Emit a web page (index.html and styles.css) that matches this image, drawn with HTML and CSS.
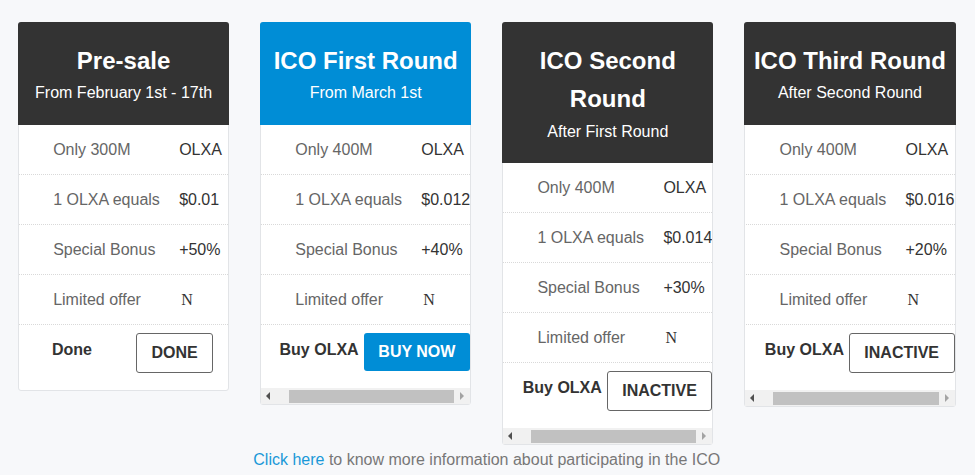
FILE: index.html
```html
<!DOCTYPE html>
<html lang="en">
<head>
<meta charset="utf-8">
<title>ICO Rounds</title>
<link rel="stylesheet" href="styles.css">
</head>
<body>
<div class="page">
  <div class="cards">
    <div class="card">
      <div class="head">
        <div class="title">Pre-sale</div>
        <div class="sub">From February 1st - 17th</div>
      </div>
      <div class="scroll">
        <div class="inner">
          <div class="row"><span class="label">Only 300M</span><span class="value">OLXA</span></div>
          <div class="row"><span class="label">1 OLXA equals</span><span class="value">$0.01</span></div>
          <div class="row"><span class="label">Special Bonus</span><span class="value">+50%</span></div>
          <div class="row"><span class="label">Limited offer</span><span class="value"><span class="icon">N</span></span></div>
          <div class="foot"><span class="flabel">Done</span><span class="btn">DONE</span></div>
        </div>
      </div>
    </div>
    <div class="card">
      <div class="head blue">
        <div class="title">ICO First Round</div>
        <div class="sub">From March 1st</div>
      </div>
      <div class="scroll">
        <div class="inner">
          <div class="row"><span class="label">Only 400M</span><span class="value">OLXA</span></div>
          <div class="row"><span class="label">1 OLXA equals</span><span class="value">$0.012</span></div>
          <div class="row"><span class="label">Special Bonus</span><span class="value">+40%</span></div>
          <div class="row"><span class="label">Limited offer</span><span class="value"><span class="icon">N</span></span></div>
          <div class="foot short"><span class="flabel">Buy OLXA</span><span class="btn primary">BUY NOW</span></div>
        </div>
      </div>
      <div class="bar"><span class="arrow"><span class="tri-l"></span></span><span class="track"><span class="thumb"></span></span><span class="arrow"><span class="tri-r"></span></span></div>
    </div>
    <div class="card">
      <div class="head">
        <div class="title">ICO Second Round</div>
        <div class="sub">After First Round</div>
      </div>
      <div class="scroll">
        <div class="inner">
          <div class="row"><span class="label">Only 400M</span><span class="value">OLXA</span></div>
          <div class="row"><span class="label">1 OLXA equals</span><span class="value">$0.014</span></div>
          <div class="row"><span class="label">Special Bonus</span><span class="value">+30%</span></div>
          <div class="row"><span class="label">Limited offer</span><span class="value"><span class="icon">N</span></span></div>
          <div class="foot short"><span class="flabel">Buy OLXA</span><span class="btn">INACTIVE</span></div>
        </div>
      </div>
      <div class="bar"><span class="arrow"><span class="tri-l"></span></span><span class="track"><span class="thumb"></span></span><span class="arrow"><span class="tri-r"></span></span></div>
    </div>
    <div class="card">
      <div class="head">
        <div class="title">ICO Third Round</div>
        <div class="sub">After Second Round</div>
      </div>
      <div class="scroll">
        <div class="inner">
          <div class="row"><span class="label">Only 400M</span><span class="value">OLXA</span></div>
          <div class="row"><span class="label">1 OLXA equals</span><span class="value">$0.016</span></div>
          <div class="row"><span class="label">Special Bonus</span><span class="value">+20%</span></div>
          <div class="row"><span class="label">Limited offer</span><span class="value"><span class="icon">N</span></span></div>
          <div class="foot short"><span class="flabel">Buy OLXA</span><span class="btn">INACTIVE</span></div>
        </div>
      </div>
      <div class="bar"><span class="arrow"><span class="tri-l"></span></span><span class="track"><span class="thumb"></span></span><span class="arrow"><span class="tri-r"></span></span></div>
    </div>
  </div>
  <p class="note"><a class="link" href="#">Click here</a> to know more information about participating in the ICO</p>
</div>
</body>
</html>
```

FILE: styles.css
```css
html, body {
  margin: 0;
  padding: 0;
  background: #f7f8fa;
}
body {
  font-family: "Liberation Sans", Arial, sans-serif;
  font-size: 16px;
  color: #333;
}
.page {
  padding: 22px 19.5px 0 18px;
}
.cards {
  display: grid;
  grid-template-columns: repeat(4, 1fr);
  column-gap: 31px;
  align-items: start;
}
.card {
  background: #fff;
  border: 1px solid #e2e4e7;
  border-radius: 3px;
  min-width: 0;
}
.head {
  margin: -1px -1px 0;
  padding: 20px 8px 19px;
  background: #333333;
  color: #fff;
  text-align: center;
  border-radius: 3px 3px 0 0;
}
.head.blue {
  background: #008dd6;
}
.title {
  font-size: 24px;
  font-weight: bold;
  line-height: 38.4px;
}
.sub {
  font-size: 16px;
  line-height: 25.6px;
}
.scroll {
  overflow: hidden;
  direction: rtl;
}
.inner {
  direction: ltr;
  width: max-content;
  min-width: 100%;
}
.row {
  display: flex;
  justify-content: flex-end;
  align-items: center;
  height: 49px;
  border-bottom: 1px dotted #d9d9d9;
  line-height: 18px;
}
.label {
  flex: none;
  width: 126px;
  color: #666;
  white-space: nowrap;
}
.value {
  flex: none;
  width: 49px;
  color: #333;
  white-space: nowrap;
}
.icon {
  font-family: "Liberation Serif", "Times New Roman", serif;
  margin-left: 2px;
}
.foot {
  display: flex;
  align-items: flex-start;
  padding: 8px 0 17px 33px;
  line-height: 18px;
}
.foot.short {
  padding-bottom: 17px;
}
.flabel {
  flex: none;
  width: 84px;
  padding-top: 8px;
  font-weight: bold;
  color: #333;
  white-space: nowrap;
}
.btn {
  flex: none;
  display: block;
  padding: 10px 14.5px;
  border: 1px solid #666;
  border-radius: 3px;
  background: #fff;
  color: #333;
  font-weight: bold;
  white-space: nowrap;
}
.btn.primary {
  border: 0;
  padding: 10px 14.85px;
  background: #008dd6;
  color: #fff;
}
.bar {
  display: flex;
  height: 16px;
  background: #f1f1f1;
}
.arrow {
  flex: none;
  width: 17px;
  display: flex;
  align-items: center;
  justify-content: center;
}
.tri-l {
  width: 0;
  height: 0;
  border-top: 4px solid transparent;
  border-bottom: 4px solid transparent;
  border-right: 4px solid #505050;
  margin-right: 3px;
}
.tri-r {
  width: 0;
  height: 0;
  border-top: 4px solid transparent;
  border-bottom: 4px solid transparent;
  border-left: 4px solid #a3a3a3;
  margin-left: 1px;
}
.track {
  flex: 1;
  display: flex;
  align-items: center;
}
.thumb {
  flex: 1;
  height: 13px;
  margin-left: 11px;
  margin-right: -1px;
  background: #c1c1c1;
}
.note {
  margin: 6px 0 0;
  text-align: center;
  line-height: 18px;
  color: #777;
}
.link {
  color: #1a98d8;
  text-decoration: none;
}
```
